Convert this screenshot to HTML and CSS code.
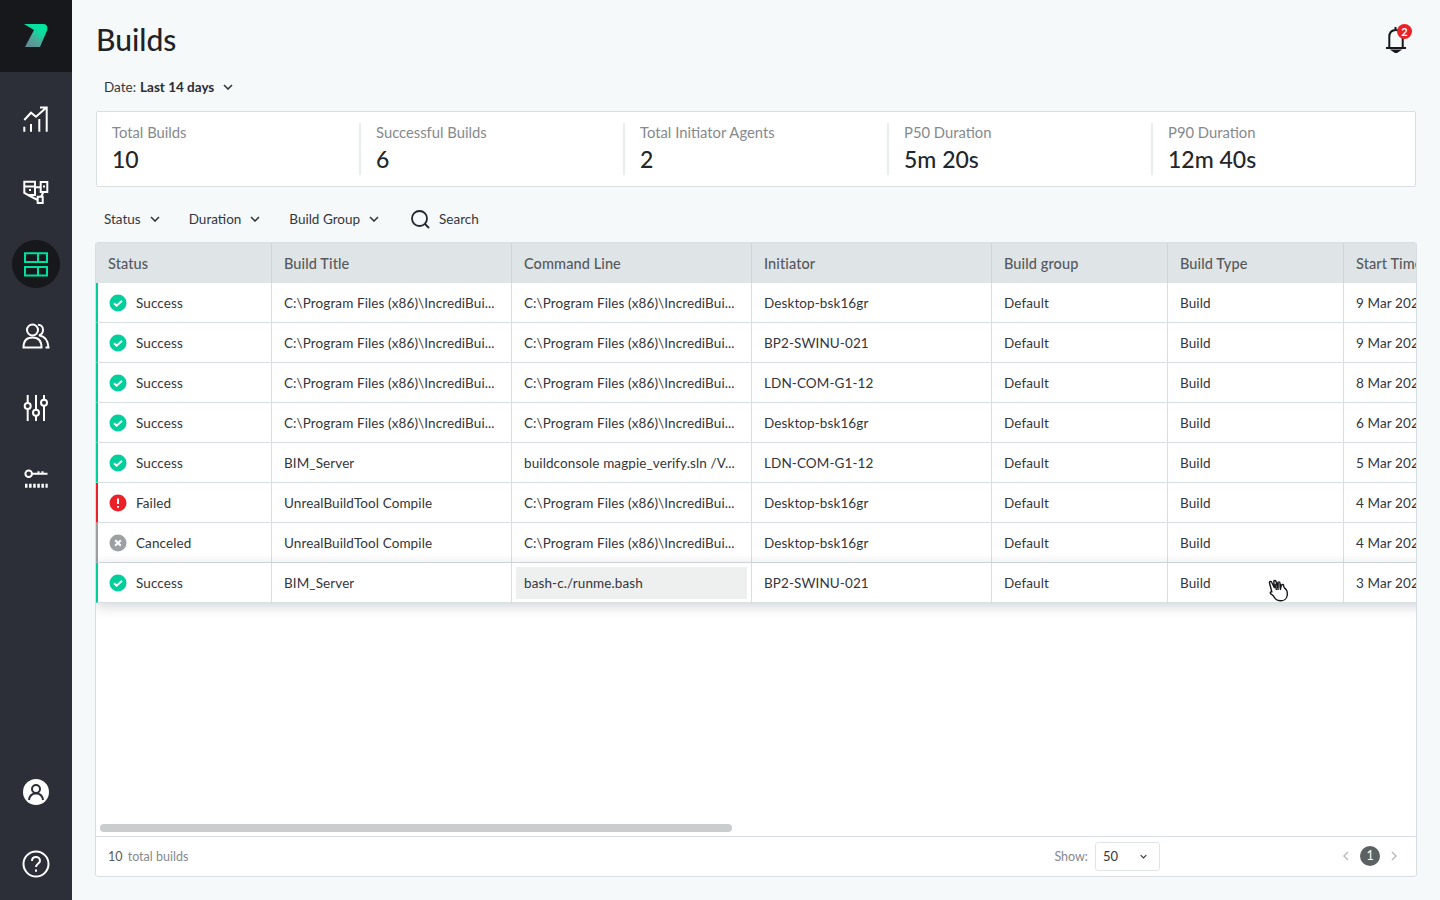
FILE: index.html
```html
<!DOCTYPE html>
<html lang="en">
  <head>
    <meta charset="UTF-8" />
    <meta name="viewport" content="width=device-width, initial-scale=1.0" />
    <title>Builds</title>
    <link rel="stylesheet" href="styles.css">
  </head>
  <body>
    <aside class="sidebar">
      <div class="logo">
        <svg width="24" height="24" viewBox="0 0 24 24">
          <defs>
            <linearGradient id="logoFill" x1="0.75" y1="0.1" x2="0.2" y2="1">
              <stop offset="0" stop-color="#00e6a0" />
              <stop offset="0.3" stop-color="#10d8a0" />
              <stop offset="0.6" stop-color="#4fa898" />
              <stop offset="1" stop-color="#5f8a96" />
            </linearGradient>
          </defs>
          <path d="M0 0H19Q24 0 23.4 5.500L16 23H1L10 6Z" fill="url(#logoFill)" />
        </svg>
      </div>
      <nav class="nav">
        <div class="nav-item">
          <svg width="28" height="28" viewBox="0 0 28 28" class="nav-icon">
            <path d="M2.300 14L9 6.700l5 4L24.700 1.300M18 1.500h6.700V25.700M2.300 20.700v5M9 18v7.700M17.300 13v12.700" />
          </svg>
        </div>
        <div class="nav-item">
          <svg width="28" height="28" viewBox="0 0 28 28" class="nav-icon">
            <path d="M2.300 3.700H13V17H6l-3.700-2zM2.300 8.500H13M7 12h2M13 9.300h5.700M18.700 4h6.600v10h-6.600zM21 8.500h2M21.500 14L19 18.700M6 17l9.700 5M15.700 18.700h5V25h-5z" />
          </svg>
        </div>
        <div class="nav-item active">
          <svg width="26" height="26" viewBox="0 0 26 26" class="nav-icon">
            <path d="M2 2.300h22V11H2zM2 16h22v8.500H2zM15 2.300V11M15 16v8.500" />
          </svg>
        </div>
        <div class="nav-item">
          <svg width="28" height="28" viewBox="0 0 28 28" class="nav-icon">
            <circle cx="10.500" cy="8" r="5.500" />
            <path d="M1.500 25.500c0-7 3-10 9-10s9 3 9 10zM16 2.800c3 0 5 2.200 5 5.200s-2 4.700-4 5.200c5 .8 9 4 9.500 12.300h-3" />
          </svg>
        </div>
        <div class="nav-item">
          <svg width="28" height="28" viewBox="0 0 28 28" class="nav-icon">
            <circle cx="5.700" cy="12" r="3" />
            <circle cx="14" cy="18.700" r="3" />
            <circle cx="22" cy="8.700" r="3" />
            <path d="M5.700 1v8M5.700 15v12M14 1v14.700M14 21.700V27M22 1v4.700M22 11.700V27" />
          </svg>
        </div>
        <div class="nav-item">
          <svg width="28" height="28" viewBox="0 0 28 28" class="nav-icon">
            <circle cx="6.700" cy="7.700" r="3.300" />
            <path d="M10 7.700h15.500M16.500 7.700V5.200M20.500 7.700V5.200" />
            <path class="dotted" d="M3 19.700H25.700" />
          </svg>
        </div>
      </nav>
      <div class="nav-bottom">
        <div class="nav-item">
          <svg width="28" height="28" viewBox="0 0 28 28">
            <circle cx="14" cy="14" r="13" fill="#fff" />
            <circle cx="14" cy="11" r="4" fill="none" stroke="#2c2f38" stroke-width="2" />
            <path d="M7 22c.5-4 3-6.500 7-6.500s6.500 2.500 7 6.500" fill="none" stroke="#2c2f38" stroke-width="2" />
          </svg>
        </div>
        <div class="nav-item">
          <svg width="28" height="28" viewBox="0 0 28 28" class="nav-icon">
            <circle cx="14" cy="14" r="12.500" />
            <path d="M10 11c0-2.500 1.800-4 4-4s4 1.500 4 3.700c0 3-4 3.300-4 6.300" />
            <path d="M14 19.500v2.200" />
          </svg>
        </div>
      </div>
    </aside>

    <main class="content">
      <header class="page-header">
        <h1>Builds</h1>
        <div class="bell">
          <svg width="20" height="27" viewBox="0 0 20 27">
            <path d="M0 22h20M3.300 22V11c0-4.500 2.700-7 6.700-7s6.700 2.500 6.700 7v11M9.500 4V1M7 24.500h6l-3 2z" fill="none" stroke="#17181b" stroke-width="2" />
          </svg>
          <span class="badge">2</span>
        </div>
      </header>

      <div class="date-filter">
        <span>Date:</span> <strong>Last 14 days</strong>
        <svg class="chevron" width="10" height="6" viewBox="0 0 10 6"><path d="M1 1l4 4 4-4" /></svg>
      </div>

      <section class="stats">
        <div class="stat">
          <div class="stat-label">Total Builds</div>
          <div class="stat-value">10</div>
        </div>
        <div class="stat">
          <div class="stat-label">Successful Builds</div>
          <div class="stat-value">6</div>
        </div>
        <div class="stat">
          <div class="stat-label">Total Initiator Agents</div>
          <div class="stat-value">2</div>
        </div>
        <div class="stat">
          <div class="stat-label">P50 Duration</div>
          <div class="stat-value">5m 20s</div>
        </div>
        <div class="stat">
          <div class="stat-label">P90 Duration</div>
          <div class="stat-value">12m 40s</div>
        </div>
      </section>

      <div class="filters">
        <div class="filter">Status <svg class="chevron" width="10" height="6" viewBox="0 0 10 6"><path d="M1 1l4 4 4-4" /></svg></div>
        <div class="filter">Duration <svg class="chevron" width="10" height="6" viewBox="0 0 10 6"><path d="M1 1l4 4 4-4" /></svg></div>
        <div class="filter">Build Group <svg class="chevron" width="10" height="6" viewBox="0 0 10 6"><path d="M1 1l4 4 4-4" /></svg></div>
        <div class="search">
          <svg width="19" height="19" viewBox="0 0 19 19"><circle cx="8.500" cy="8.500" r="7.500" /><path d="M14 14l4 4" /></svg>
          Search
        </div>
      </div>

      <section class="panel">
        <div class="table-wrap">
          <table class="builds">
            <thead>
              <tr>
                <th class="col-s">Status</th>
                <th class="col-l">Build Title</th>
                <th class="col-l">Command Line</th>
                <th class="col-l">Initiator</th>
                <th class="col-s">Build group</th>
                <th class="col-s">Build Type</th>
                <th class="col-s">Start Time</th>
              </tr>
            </thead>
            <tbody id="rows"></tbody>
          </table>
        </div>
        <div class="scrollbar"><div class="thumb"></div></div>
        <footer class="panel-footer">
          <div class="total"><span>10</span> total builds</div>
          <div class="show">
            Show:
            <div class="select">50 <svg class="chevron small" width="7" height="5" viewBox="0 0 10 6"><path d="M1 1l4 4 4-4" /></svg></div>
          </div>
          <div class="pager">
            <svg class="page-arrow" width="7" height="10" viewBox="0 0 7 10"><path d="M6 1L2 5l4 4" /></svg>
            <span class="page-num">1</span>
            <svg class="page-arrow" width="7" height="10" viewBox="0 0 7 10"><path d="M1 1l4 4-4 4" /></svg>
          </div>
        </footer>
        <svg class="hand" width="22" height="24" viewBox="0 0 22 24">
          <path d="M4 13.500L1.500 4c-.4-1.600 1.600-2.200 2.200-.7L6.500 9 5.800 2.800c-.2-1.600 2-1.900 2.300-.3L9.500 9l.3-5c.1-1.500 2.100-1.400 2.200.1l.3 5.400 1.300-3.400c.6-1.300 2.300-.6 2 .8l.8 2c2.200 1.500 3.300 4.600 2.800 7.600-.5 3.300-3.500 5.500-7 5.300-3.200-.2-5.500-2-6.700-4.800L2.500 14.500c-.7-1.700 1-2.700 1.500-1z" />
          <path d="M7 5l1.500 6M10 4v7M12.500 5v6" />
        </svg>
      </section>
    </main>

    <script>
      const LONG_PATH = "C:\\Program Files (x86)\\IncrediBui...";
      const builds = [
        ["ok", "Success", LONG_PATH, LONG_PATH, "Desktop-bsk16gr", "9 Mar 2021"],
        ["ok", "Success", LONG_PATH, LONG_PATH, "BP2-SWINU-021", "9 Mar 2021"],
        ["ok", "Success", LONG_PATH, LONG_PATH, "LDN-COM-G1-12", "8 Mar 2021"],
        ["ok", "Success", LONG_PATH, LONG_PATH, "Desktop-bsk16gr", "6 Mar 2021"],
        ["ok", "Success", "BIM_Server", "buildconsole magpie_verify.sln /V...", "LDN-COM-G1-12", "5 Mar 2021"],
        ["fail", "Failed", "UnrealBuildTool Compile", LONG_PATH, "Desktop-bsk16gr", "4 Mar 2021"],
        ["cancel", "Canceled", "UnrealBuildTool Compile", LONG_PATH, "Desktop-bsk16gr", "4 Mar 2021"],
        ["ok", "Success", "BIM_Server", "bash-c./runme.bash", "BP2-SWINU-021", "3 Mar 2021"],
      ];

      const statusIcons = {
        ok: '<path d="M5 9.200l2.700 2.500L13 6.800" stroke="#fff" stroke-width="2" fill="none"/>',
        fail: '<path d="M9 4.500v5.500M9 12v1.800" stroke="#fff" stroke-width="2" fill="none"/>',
        cancel: '<path d="M6.200 6.200l5.600 5.600M11.800 6.200l-5.600 5.600" stroke="#fff" stroke-width="2" fill="none"/>',
      };

      let tableContent = "";
      builds.forEach((b, i) => {
        const hovered = i === builds.length - 1;
        tableContent += `
          <tr class="row-${b[0]}${hovered ? " hovered" : ""}">
            <td class="status-cell">
              <div class="status">
                <svg class="status-icon" width="18" height="18" viewBox="0 0 18 18"><circle cx="9" cy="9" r="8.500"/>${statusIcons[b[0]]}</svg>
                ${b[1]}
              </div>
            </td>
            <td>${b[2]}</td>
            <td>${hovered ? `<span class="cell-selected">${b[3]}</span>` : b[3]}</td>
            <td>${b[4]}</td>
            <td>Default</td>
            <td>Build</td>
            <td>${b[5]}</td>
          </tr>
        `;
      });
      document.getElementById("rows").innerHTML = tableContent;
    </script>
  </body>
</html>
```

FILE: styles.css
```css
* {
  box-sizing: border-box;
}
html,
body {
  height: 100%;
}
body {
  margin: 0;
  display: flex;
  overflow: hidden;
  background-color: #f5f9fa;
  color: #33363b;
  font-family: "Lato", "Liberation Sans", sans-serif;
  font-size: 13.5px;
  letter-spacing: 0.1px;
}

/* sidebar */
.sidebar {
  width: 72px;
  flex-shrink: 0;
  display: flex;
  flex-direction: column;
  background-color: #2c2f38;
}
.logo {
  height: 72px;
  display: flex;
  align-items: center;
  justify-content: center;
  background-color: #17181b;
}
.nav {
  padding-top: 12px;
  flex: 1;
}
.nav-item {
  height: 72px;
  display: flex;
  align-items: center;
  justify-content: center;
  position: relative;
}
.nav-icon {
  fill: none;
  stroke: #fff;
  stroke-width: 2;
}
.nav-icon .dotted {
  stroke-dasharray: 2.500 1.600;
  stroke-width: 4;
}
.nav-item.active::before {
  content: "";
  position: absolute;
  left: 12px;
  top: 12px;
  width: 48px;
  height: 48px;
  border-radius: 50%;
  background-color: #17181b;
}
.nav-item.active .nav-icon {
  position: relative;
  stroke: #00e0a0;
  stroke-width: 2;
}

/* page */
.content {
  flex: 1;
  min-width: 0;
  display: flex;
  flex-direction: column;
  padding: 0 24px 23px 24px;
}
.page-header {
  height: 72px;
  flex-shrink: 0;
  padding-top: 6px;
  display: flex;
  align-items: center;
  justify-content: space-between;
}
h1 {
  margin: 0;
  font-size: 30px;
  font-weight: 500;
  letter-spacing: 0;
  color: #1f2226;
}
.bell {
  position: relative;
  width: 20px;
  height: 27px;
  margin-right: 10px;
  margin-top: 1px;
}
.bell svg {
  display: block;
}
.badge {
  position: absolute;
  top: -2px;
  left: 11px;
  width: 15px;
  height: 15px;
  border-radius: 50%;
  background-color: #ea2127;
  color: #fff;
  font-size: 11px;
  font-weight: 700;
  line-height: 15px;
  text-align: center;
}
.date-filter {
  height: 39px;
  flex-shrink: 0;
  padding: 0 8px 10px;
  display: flex;
  align-items: center;
  gap: 4px;
  letter-spacing: 0;
}
.date-filter strong {
  font-weight: 700;
  color: #2a2d31;
}
.date-filter .chevron {
  margin-left: 5px;
}
.chevron {
  fill: none;
  stroke: #33363b;
  stroke-width: 1.6;
}

/* stats */
.stats {
  height: 76px;
  flex-shrink: 0;
  display: flex;
  align-items: center;
  background-color: #fff;
  border: 1px solid #d8dfe3;
  border-radius: 2px;
}
.stat {
  width: 264px;
  height: 52px;
  padding-left: 15px;
  border-right: 2px solid #e8eced;
}
.stat:last-child {
  border-right: none;
  flex: 1;
}
.stat-label {
  margin-top: -1px;
  margin-bottom: 3px;
  font-size: 14.8px;
  line-height: 20px;
  letter-spacing: 0;
  color: #85898d;
}
.stat-value {
  font-size: 23px;
  line-height: 28px;
  font-weight: 500;
  letter-spacing: 0;
  color: #23262a;
}

/* filters */
.filters {
  height: 55px;
  flex-shrink: 0;
  padding: 17px 8px 8px;
  display: flex;
  align-items: center;
  gap: 29px;
  letter-spacing: 0;
}
.filter {
  display: flex;
  align-items: center;
  gap: 9px;
}
.search {
  margin-left: 3px;
  display: flex;
  align-items: center;
  gap: 9px;
}
.search svg {
  fill: none;
  stroke: #23262a;
  stroke-width: 1.8;
}

/* table */
.panel {
  position: relative;
  flex: 1;
  min-height: 0;
  margin-left: -1px;
  margin-right: -1px;
  display: flex;
  flex-direction: column;
  background-color: #fff;
  border: 1px solid #d8dfe3;
  border-radius: 3px;
}
.table-wrap {
  flex: 1;
  min-height: 0;
  overflow: hidden;
}
.builds {
  width: 1424px;
  table-layout: fixed;
  border-collapse: separate;
  border-spacing: 0;
}
.col-s {
  width: 176px;
}
.col-l {
  width: 240px;
}
th {
  height: 40px;
  padding: 0 12px;
  background-color: #dfe4e6;
  border-right: 1px solid #cfd6d9;
  color: #55595d;
  font-size: 14.5px;
  font-weight: 500;
  text-align: left;
  white-space: nowrap;
}
td {
  height: 40px;
  padding: 0 12px;
  border-right: 1px solid #d8dfe3;
  border-bottom: 1px solid #d8dfe3;
  white-space: nowrap;
  overflow: hidden;
}
.status-cell {
  border-left: 2px solid #00cf9c;
  padding-left: 11px;
}
.row-fail .status-cell {
  border-left-color: #ea2127;
}
.row-cancel .status-cell {
  border-left-color: #9aa0a4;
}
.status {
  display: flex;
  align-items: center;
  gap: 9px;
}
.row-ok .status-icon {
  fill: #00cf9c;
}
.row-fail .status-icon {
  fill: #ea2127;
}
.row-cancel .status-icon {
  fill: #9aa0a4;
}
.hovered {
  position: relative;
  box-shadow: 0 3px 12px rgba(40, 50, 60, 0.22);
}
.cell-selected {
  display: block;
  margin: 0 -8px;
  padding: 0 8px;
  height: 32px;
  line-height: 32px;
  background-color: #eeefef;
}
.scrollbar {
  flex-shrink: 0;
  height: 15px;
  padding: 3px 4px 4px;
}
.thumb {
  width: 632px;
  height: 8px;
  border-radius: 4px;
  background-color: #c9cdcd;
}
.panel-footer {
  height: 40px;
  flex-shrink: 0;
  display: flex;
  align-items: center;
  padding: 0 18px 1px 12px;
  border-top: 1px solid #d8dfe3;
  color: #85898d;
  font-size: 12.5px;
  letter-spacing: 0;
}
.total {
  flex: 1;
}
.total span {
  margin-right: 2px;
  color: #55595d;
}
.show {
  display: flex;
  align-items: center;
  gap: 7px;
  margin-right: 182px;
}
.select {
  width: 65px;
  height: 29px;
  padding: 0 8px 0 7px;
  display: flex;
  align-items: center;
  justify-content: space-between;
  background-color: #fff;
  border: 1px solid #dfe5e7;
  border-radius: 3px;
  color: #33363b;
  font-size: 13px;
}
.select .small {
  margin-right: 4px;
}
.pager {
  display: flex;
  align-items: center;
  gap: 11px;
}
.page-arrow {
  fill: none;
  stroke: #b9bdbf;
  stroke-width: 1.5;
}
.page-num {
  width: 20px;
  height: 20px;
  border-radius: 50%;
  background-color: #5c6163;
  color: #fff;
  font-size: 12.5px;
  line-height: 20px;
  text-align: center;
}
.hand {
  position: absolute;
  left: 1172px;
  top: 336px;
  fill: #fff;
  stroke: #17181b;
  stroke-width: 1.4;
}
```
